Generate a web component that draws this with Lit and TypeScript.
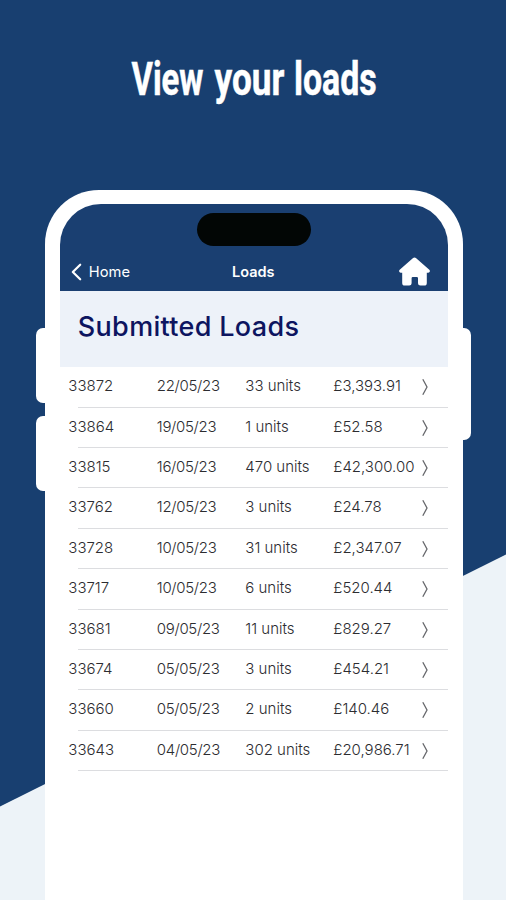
import { LitElement, html, css } from "lit";
import { customElement, property } from "lit/decorators.js";

interface Load {
  id: string;
  date: string;
  units: string;
  value: string;
}

const LOADS: Load[] = [
  { id: "33872", date: "22/05/23", units: "33 units", value: "£3,393.91" },
  { id: "33864", date: "19/05/23", units: "1 units", value: "£52.58" },
  { id: "33815", date: "16/05/23", units: "470 units", value: "£42,300.00" },
  { id: "33762", date: "12/05/23", units: "3 units", value: "£24.78" },
  { id: "33728", date: "10/05/23", units: "31 units", value: "£2,347.07" },
  { id: "33717", date: "10/05/23", units: "6 units", value: "£520.44" },
  { id: "33681", date: "09/05/23", units: "11 units", value: "£829.27" },
  { id: "33674", date: "05/05/23", units: "3 units", value: "£454.21" },
  { id: "33660", date: "05/05/23", units: "2 units", value: "£140.46" },
  { id: "33643", date: "04/05/23", units: "302 units", value: "£20,986.71" },
];

@customElement("load-row")
class LoadRow extends LitElement {
  @property({ attribute: false }) load!: Load;

  static styles = css`
    :host {
      display: block;
      height: 40.42px;
    }
    .row {
      display: grid;
      grid-template-columns: 88.5px 88.5px 88px 88px 1fr;
      align-items: center;
      box-sizing: border-box;
      height: 100%;
      padding: 0 0 3px 8.5px;
      background: linear-gradient(#dcdde0, #dcdde0) 18px 100% / 100% 1.2px no-repeat;
      color: #2c2c30;
      font: 300 15px/20px Inter, sans-serif;
      white-space: nowrap;
    }
    .date {
      letter-spacing: -0.3px;
    }
    .chevron {
      display: block;
      width: 8px;
      height: 18px;
      margin-top: 2px;
      fill: none;
      stroke: #66676b;
      stroke-width: 1.3;
    }
  `;

  render() {
    return html`<div class="row">
      <span>${this.load.id}</span>
      <span class="date">${this.load.date}</span>
      <span>${this.load.units}</span>
      <span>${this.load.value}</span>
      <svg class="chevron" viewBox="0 0 8 18"><path d="M1.8 1.3 6 9 1.8 16.7" /></svg>
    </div>`;
  }
}

@customElement("app-root")
class AppRoot extends LitElement {
  static styles = css`
    :host {
      display: block;
      width: 506px;
      height: 900px;
      overflow: hidden;
      font-family: Inter, sans-serif;
    }
    .page {
      display: flex;
      flex-direction: column;
      box-sizing: border-box;
      height: 900px;
      padding-top: 50px;
      background: #183f70;
      position: relative;
    }
    .slope {
      position: absolute;
      inset: 0;
      background: #edf3f8;
      clip-path: polygon(0 806.4px, 100% 554.6px, 100% 100%, 0 100%);
    }
    .headline {
      display: block;
      width: 506px;
      height: 70px;
      flex: none;
      fill: #fff;
      stroke: #fff;
      stroke-width: 0.5;
      font: 700 46px Roboto, sans-serif;
    }
    .phone {
      position: relative;
      box-sizing: border-box;
      width: 418.5px;
      height: 800px;
      margin: 70px 0 0 44.5px;
      padding: 13.5px 15.3px 0 15.3px;
      border-radius: 54px 54px 0 0;
      background: #fff;
      flex: none;
    }
    .key {
      position: absolute;
      width: 9px;
      background: #fff;
    }
    .key.up {
      left: -8.5px;
      top: 138px;
      height: 75px;
      border-radius: 7px 0 0 7px;
    }
    .key.down {
      left: -8.5px;
      top: 225.5px;
      height: 75px;
      border-radius: 7px 0 0 7px;
    }
    .key.power {
      right: -8.3px;
      top: 138px;
      height: 111.5px;
      border-radius: 0 7px 7px 0;
    }
    .screen {
      border-radius: 41px 41px 0 0;
      overflow: hidden;
    }
    .top {
      display: flex;
      flex-direction: column;
      align-items: center;
      box-sizing: border-box;
      height: 87.5px;
      padding-top: 9.5px;
      background: #1a3f71;
    }
    .island {
      flex: none;
      width: 113.5px;
      height: 33px;
      border-radius: 17px;
      background: #020605;
    }
    .nav {
      display: grid;
      grid-template-columns: 1fr auto 1fr;
      align-items: center;
      box-sizing: border-box;
      flex: none;
      width: 100%;
      height: 50px;
      padding: 0 18px 0 11px;
      color: #fff;
      font-size: 14.7px;
    }
    .back {
      display: flex;
      align-items: center;
      gap: 7px;
      padding-top: 1px;
    }
    .back svg {
      width: 11px;
      height: 18px;
      fill: none;
      stroke: #fff;
      stroke-width: 2.2;
      stroke-linecap: round;
      stroke-linejoin: round;
    }
    .title {
      padding-left: 6px;
      font-weight: 600;
      font-size: 14.5px;
    }
    .home {
      width: 31px;
      height: 29px;
      justify-self: end;
      fill: #fff;
    }
    .band {
      box-sizing: border-box;
      height: 76.4px;
      padding: 18px 0 0 18px;
      background: #edf2f9;
      color: #0d1560;
      font-size: 27px;
      font-weight: 500;
      line-height: 36px;
      letter-spacing: 0.32px;
      white-space: nowrap;
    }
  `;

  render() {
    return html`<main class="page">
      <div class="slope"></div>
      <svg class="headline" viewBox="0 0 506 70">
        <g transform="scale(0.72 1)">
          <text x="182.6" y="45" textLength="100" lengthAdjust="spacingAndGlyphs">View</text>
          <text x="298" y="45" textLength="97" lengthAdjust="spacingAndGlyphs">your</text>
          <text x="408.3" y="45" textLength="115" lengthAdjust="spacingAndGlyphs">loads</text>
        </g>
      </svg>
      <section class="phone">
        <div class="key up"></div>
        <div class="key down"></div>
        <div class="key power"></div>
        <div class="screen">
          <header class="top">
            <div class="island"></div>
            <nav class="nav">
              <span class="back">
                <svg viewBox="0 0 11 18"><path d="M9.2 1.7 1.8 9l7.4 7.3" /></svg>Home
              </span>
              <span class="title">Loads</span>
              <svg class="home" viewBox="0 0 31 29">
                <path
                  d="M13.8 1.2Q15.5-.3 17.2 1.2L30.3 12.7Q31.2 13.6 30.7 14.8 30.2 15.8 29 15.8H27.8V26Q27.8 28.6 25.2 28.6H21.4Q19 28.6 19 26.2V21.2Q19 20 17.8 20H13.8Q12.6 20 12.6 21.2V26.2Q12.6 28.6 10.2 28.6H5.8Q3.2 28.6 3.2 26V15.8H2Q.8 15.8.3 14.8-.2 13.6.7 12.7Z"
                />
              </svg>
            </nav>
          </header>
          <div class="band">Submitted Loads</div>
          ${LOADS.map((load) => html`<load-row .load=${load}></load-row>`)}
        </div>
      </section>
    </main>`;
  }
}
